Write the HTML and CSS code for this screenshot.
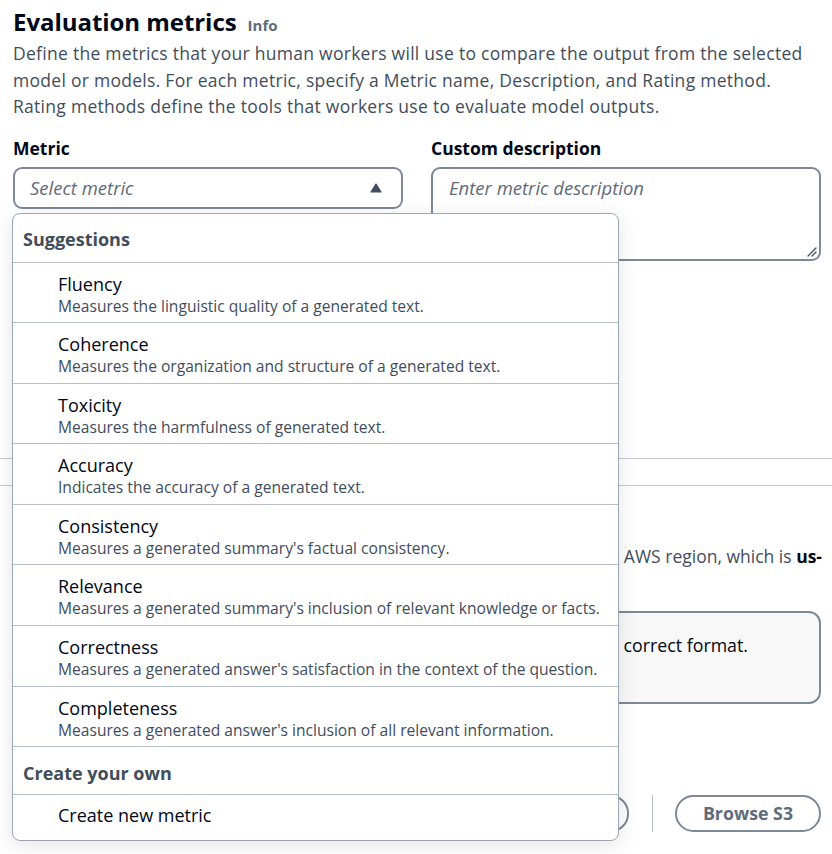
FILE: index.html
```html
<!DOCTYPE html>
<html lang="en">
<head>
<meta charset="utf-8">
<title>Evaluation metrics</title>
<link rel="stylesheet" href="styles.css">
</head>
<body>
<div class="page">
  <header class="head">
    <h1 class="title">Evaluation metrics</h1>
    <a class="info" href="#">Info</a>
  </header>
  <p class="lead">Define the metrics that your human workers will use to compare the output from the selected model or models. For each metric, specify a Metric name, Description, and Rating method. Rating methods define the tools that workers use to evaluate model outputs.</p>

  <div class="fields">
    <div class="field metric-field">
      <label class="label">Metric</label>
      <div class="select">
        <span class="placeholder">Select metric</span>
        <svg class="caret" width="12" height="10" viewBox="0 0 12 10"><path d="M6 1 L11 9 L1 9 Z" fill="#414d5c" stroke="#414d5c" stroke-width="1.2" stroke-linejoin="round"/></svg>
      </div>
      <div class="dropdown">
        <div class="group-head">Suggestions</div>
        <div class="option"><div class="opt-title">Fluency</div><div class="opt-desc">Measures the linguistic quality of a generated text.</div></div>
        <div class="option"><div class="opt-title">Coherence</div><div class="opt-desc">Measures the organization and structure of a generated text.</div></div>
        <div class="option"><div class="opt-title">Toxicity</div><div class="opt-desc">Measures the harmfulness of generated text.</div></div>
        <div class="option"><div class="opt-title">Accuracy</div><div class="opt-desc">Indicates the accuracy of a generated text.</div></div>
        <div class="option"><div class="opt-title">Consistency</div><div class="opt-desc">Measures a generated summary's factual consistency.</div></div>
        <div class="option"><div class="opt-title">Relevance</div><div class="opt-desc">Measures a generated summary's inclusion of relevant knowledge or facts.</div></div>
        <div class="option"><div class="opt-title">Correctness</div><div class="opt-desc">Measures a generated answer's satisfaction in the context of the question.</div></div>
        <div class="option"><div class="opt-title">Completeness</div><div class="opt-desc">Measures a generated answer's inclusion of all relevant information.</div></div>
        <div class="group-head own">Create your own</div>
        <div class="option single"><div class="opt-title">Create new metric</div></div>
      </div>
    </div>
    <div class="field">
      <label class="label">Custom description</label>
      <div class="textarea">
        <span class="placeholder">Enter metric description</span>
        <svg class="resize" width="12" height="12" viewBox="0 0 12 12"><path d="M11 3 L3 11 M11 7 L7 11" stroke="#414d5c" stroke-width="1.3" stroke-linecap="round"/></svg>
      </div>
    </div>
  </div>

  <div class="section-rule"></div>
  <div class="section-rule second"></div>

  <p class="s3-note">Results are saved to a bucket in the current AWS region, which is <b>us-</b></p>

  <div class="alert">
    <p class="alert-text">Enter the output location in the correct format.</p>
  </div>

  <div class="s3-row">
    <div class="s3-input"></div>
    <div class="divider"></div>
    <button class="btn">Browse S3</button>
  </div>
</div>
</body>
</html>
```

FILE: styles.css
```css
* { box-sizing: border-box; }
html, body { margin: 0; padding: 0; background: #ffffff; }
body {
  font-family: "Open Sans", "Noto Sans", sans-serif;
  color: #000716;
  width: 832px;
  height: 854px;
  overflow: hidden;
}
.page { padding: 6px 11px 0 13px; position: relative; }

.head { display: flex; align-items: baseline; gap: 11px; height: 32px; }
.title { margin: 0; font-size: 24px; font-weight: 700; line-height: 32px; color: #000716; letter-spacing: -0.05px; }
.info { font-size: 15px; font-weight: 700; color: #5f6b7a; text-decoration: none; }

.lead { margin: 2px 0 0; font-size: 17.5px; letter-spacing: 0.28px; line-height: 26.5px; color: #414d5c; width: 808px; }

.fields { display: grid; grid-template-columns: 390px 390px; column-gap: 28px; margin-top: 17px; }
.field { position: relative; }
.label { display: block; font-size: 17.5px; font-weight: 700; line-height: 22px; color: #000716; }

.select {
  margin-top: 8px;
  height: 42px;
  border: 2px solid #7d8998;
  border-radius: 9px;
  display: flex;
  align-items: center;
  justify-content: space-between;
  padding: 0 19px 0 15px;
}
.placeholder { font-style: italic; font-size: 18.5px; color: #5f6b7a; }
.caret { display: block; }

.textarea {
  margin-top: 8px;
  height: 94px;
  border: 2px solid #7d8998;
  border-radius: 9px;
  padding: 6px 16px;
  position: relative;
}
.resize { position: absolute; right: 2px; bottom: 2px; }

.dropdown {
  position: absolute;
  left: -1px;
  top: 76px;
  width: 607px;
  background: #ffffff;
  border: 1px solid #9ba7b6;
  border-radius: 8px;
  box-shadow: 0 4px 20px 1px rgba(0, 7, 22, 0.10);
  z-index: 10;
  overflow: hidden;
}
.group-head {
  height: 49px;
  padding: 14px 10px 0;
  font-size: 18px;
  font-weight: 700;
  line-height: 22px;
  color: #414d5c;
  border-bottom: 1px solid #b6bec9;
}
.group-head.own { height: 48px; padding-top: 15px; }
.option {
  height: 60.6px;
  padding: 9px 10px 0 45px;
  border-bottom: 1px solid #b6bec9;
}
.option.single { height: 45px; border-bottom: 0; padding-top: 8px; }
.opt-title { font-size: 18px; line-height: 24px; color: #000716; }
.opt-desc { font-size: 15.6px; line-height: 20px; color: #414d5c; }

.section-rule { margin: 197px -11px 0 -13px; border-top: 1px solid #c6c6cd; }
.section-rule.second { margin-top: 26px; }

.s3-note {
  margin: 57px 0 0;
  font-size: 17.5px;
  line-height: 26px;
  color: #414d5c;
  text-align: right;
  width: 809px;
}
.s3-note b { color: #000716; }

.alert {
  margin-top: 42px;
  height: 93px;
  width: 808px;
  border: 2px solid #7d8998;
  border-radius: 12px;
  background: #f8f8f8;
  padding: 19px 71px 0 0;
}
.alert-text { margin: 0; font-size: 17.8px; line-height: 26px; text-align: right; white-space: nowrap; color: #000716; }

.s3-row { display: flex; align-items: center; margin-top: 91px; height: 37px; }
.s3-input { width: 616px; height: 37px; border: 2px solid #7d8998; border-radius: 18px; }
.divider { width: 1px; height: 37px; background: #b6bec9; margin: 0 22px 0 23px; }
.btn {
  width: 146px;
  height: 37px;
  border: 2px solid #7d8998;
  border-radius: 20px;
  background: #ffffff;
  font-family: inherit;
  font-size: 17.8px;
  font-weight: 700;
  color: #5f6b7a;
}
```
